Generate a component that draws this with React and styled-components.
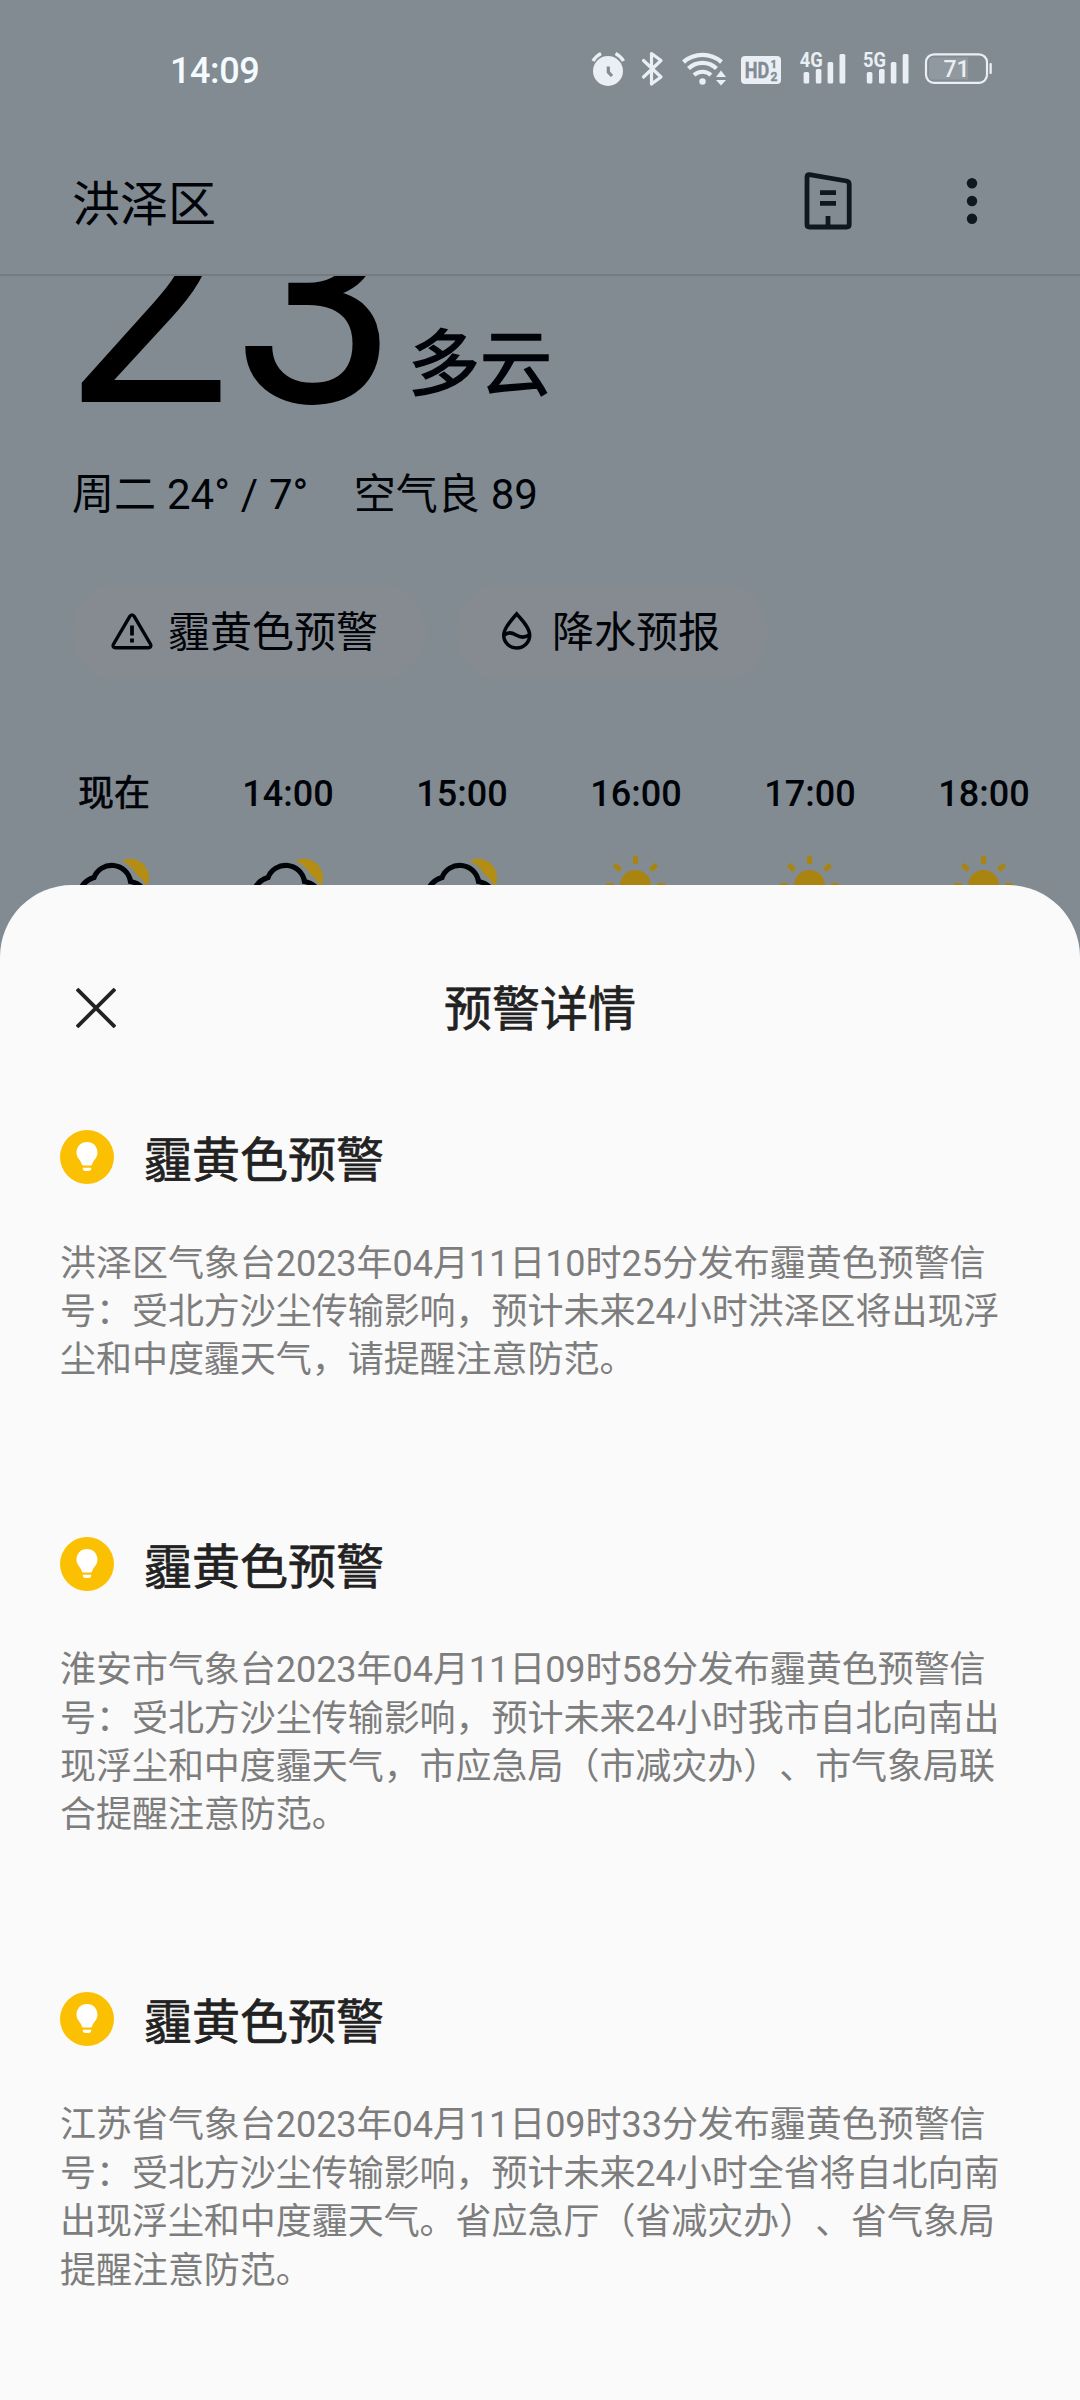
import React from "react";
import styled, { createGlobalStyle, css } from "styled-components";

const Global = createGlobalStyle`
  * { box-sizing: border-box; }
  html, body { margin: 0; padding: 0; background: #838b92; }
  body {
    font-family: Roboto, "Noto Sans CJK SC", sans-serif;
    text-spacing-trim: space-all;
    overflow: hidden;
  }
  svg { display: block; flex: none; }
`;

const medium = css`
  -webkit-text-stroke: ${(p) => p.$bold || 0.7}px currentColor;
`;

const Screen = styled.div`
  width: 1080px;
  height: 2400px;
  display: flex;
  flex-direction: column;
  background: #838b92;
  color: #000408;
  overflow: hidden;
`;

const StatusBar = styled.header`
  height: 128px;
  flex: none;
  display: flex;
  align-items: flex-start;
  justify-content: space-between;
  padding: 48px 86px 0 170px;
`;

const Clock = styled.time`
  padding-top: 1px;
  font-size: 36px;
  line-height: 44px;
  font-weight: 500;
  letter-spacing: -0.4px;
  color: #f4fbff;
`;

const TopBar = styled.nav`
  height: 148px;
  flex: none;
  display: flex;
  align-items: center;
  padding: 0 100px 0 72px;
  border-bottom: 2px solid #747b83;
`;

const City = styled.h1`
  margin: 7px 0 0;
  flex: 1;
  font-size: 48px;
  font-weight: 400;
  line-height: 60px;
`;

const Actions = styled.div`
  display: flex;
  align-items: center;
  gap: 112px;
`;

const Weather = styled.main`
  height: 609px;
  flex: none;
  overflow: hidden;
`;

const Current = styled.section`
  height: 160px;
  display: flex;
  align-items: flex-end;
  padding-left: 64px;
`;

const Temperature = styled.div`
  font-size: 298px;
  line-height: 200px;
  height: 130px;
  margin-bottom: 35px;
  display: flex;
  align-items: flex-end;
  color: #000;
`;

const Condition = styled.div`
  font-size: 72px;
  line-height: 100px;
  margin: 0 0 21px 9px;
  ${medium}
`;

const Summary = styled.p`
  margin: 29px 0 0;
  padding-left: 72px;
  display: flex;
  gap: 45.5px;
  font-size: 42px;
  line-height: 60px;
  word-spacing: 0.5px;
`;

const Chips = styled.div`
  display: flex;
  gap: 30px;
  padding-left: 72px;
  margin-top: 59px;
`;

const Chip = styled.div`
  height: 96px;
  border-radius: 48px;
  background: #868b92;
  display: flex;
  align-items: center;
  gap: 12px;
  padding: 0 48px 0 36px;
  font-size: 42px;
`;

const ChipLabel = styled.span`
  line-height: 60px;
  padding-top: 2px;
`;

const Hours = styled.div`
  display: flex;
  margin-top: 90px;
  padding-left: 27px;
`;

const Hour = styled.div`
  width: 174px;
  flex: none;
  display: flex;
  flex-direction: column;
  align-items: center;
  gap: 35px;
`;

const HourLabel = styled.span`
  font-size: 36px;
  line-height: 48px;
  font-weight: 500;
  ${(p) => p.$han && css`font-weight: 400; -webkit-text-stroke: 0.7px currentColor;`}
`;

const Sheet = styled.section`
  height: 1515px;
  flex: none;
  background: #fafafa;
  color: #222;
  border-radius: 72px 72px 0 0;
`;

const SheetHeader = styled.div`
  display: grid;
  grid-template-columns: 40px 1fr 40px;
  align-items: start;
  height: 159px;
  padding: 87px 76px 0;

  svg { margin-top: 16px; }
`;

const SheetTitle = styled.h2`
  margin: 2px 0 0;
  text-align: center;
  font-size: 48px;
  line-height: 72px;
  font-weight: 400;
  ${medium}
`;

const Alerts = styled.div`
  display: flex;
  flex-direction: column;
  gap: 143px;
  padding: 77px 60px 0;
`;

const Alert = styled.article`
  display: flex;
  flex-direction: column;
  gap: 46.5px;
`;

const AlertHead = styled.div`
  display: flex;
  align-items: center;
  gap: 30px;
  height: 72px;
`;

const AlertTitle = styled.h3`
  margin: 8px 0 0;
  font-size: 48px;
  line-height: 72px;
  font-weight: 400;
  ${medium}
`;

const AlertText = styled.p`
  margin: 0;
  width: 960px;
  font-size: 36px;
  line-height: 48.4px;
  letter-spacing: -0.04px;
  color: #7d7d7d;
`;

const ink = "#e9eff4";
const bg = "#838b92";

function Signal({ x, label }) {
  return (
    <g transform={`translate(${x} 0)`} fill={ink}>
      <text x="-3.5" y="19" fontSize="21" fontWeight="700" textLength="23" lengthAdjust="spacingAndGlyphs">{label}</text>
      <rect x="0.3" y="24" width="5.6" height="11.500" rx="1.5" />
      <rect x="12.5" y="21" width="5.6" height="14.500" rx="1.5" />
      <rect x="24.3" y="14" width="5.6" height="21.500" rx="1.5" />
      <rect x="36.2" y="6" width="5.8" height="29.500" rx="1.5" />
    </g>
  );
}

function StatusIcons() {
  return (
    <svg width="404" height="40" viewBox="0 0 404 40" fontFamily="Roboto, sans-serif">
      <g fill="none" stroke={ink} strokeWidth="3.4">
        <path d="M3 13 Q6 8 11 5.5 M25.5 5.5 Q30.500 8 33.5 13" />
        <path d="M53.500 12.500 L71 29 L61.500 36 V5.500 L71 12.500 L53.500 29" strokeWidth="3.200" strokeLinejoin="round" strokeLinecap="round" />
        <path d="M93.500 14 A29 29 0 0 1 131.500 14" strokeWidth="4.400" />
        <path d="M98.500 20.500 A20 20 0 0 1 126.500 20.500" strokeWidth="4.200" />
        <path d="M104 27 A12.500 12.500 0 0 1 121 27" strokeWidth="4" />
      </g>
      <circle cx="18" cy="23" r="15" fill={ink} />
      <path d="M18.300 18.500 V24 L22 28" fill="none" stroke={bg} strokeWidth="3.200" />
      <circle cx="112.500" cy="33.500" r="3.200" fill={ink} />
      <path d="M126 29 L131 22.500 L136 29 Z M126 32 L131 37.500 L136 32 Z" fill={ink} />
      <rect x="151" y="8" width="40" height="28" rx="4" fill={ink} />
      <g fill={bg} stroke={bg} strokeWidth="0.4" fontWeight="700">
        <text x="154.800" y="30" fontSize="22" textLength="24.500" lengthAdjust="spacingAndGlyphs">HD</text>
        <text x="180.500" y="19.500" fontSize="11">1</text>
        <text x="180.500" y="32.500" fontSize="12">2</text>
      </g>
      <Signal x={213.300} label="4G" />
      <Signal x={276.500} label="5G" />
      <rect x="336" y="6.300" width="61" height="28.500" rx="8" fill="none" stroke={ink} strokeWidth="2.200" />
      <path d="M343 9.500 H378 V31.500 H343 Q339 31.500 339 27.500 V13.500 Q339 9.500 343 9.500 Z" fill="#9098a0" />
      <rect x="399.500" y="15" width="2.300" height="11" rx="1" fill={ink} />
      <text x="366.500" y="28.800" fontSize="23" fontWeight="500" fill={ink} textAnchor="middle">71</text>
    </svg>
  );
}

const CityIcon = () => (
  <svg width="48" height="60" viewBox="0 0 48 60" fill="none" stroke="#10181f" strokeWidth="4.800">
    <path d="M5.500 3.700 L42.500 10 Q45.200 10.600 45.200 13 V53.500 Q45.200 56 42.700 56 H5.500 Q3 56 3 53.500 V6 Q3 3.300 5.500 3.700 Z" />
    <path d="M16 21.700 H32 M16 32.300 H32 M24 45 V56" />
  </svg>
);

const MoreIcon = () => (
  <svg width="16" height="60" viewBox="0 0 16 60" fill="#10181f">
    <circle cx="8" cy="12.300" r="5.200" />
    <circle cx="8" cy="30" r="5.200" />
    <circle cx="8" cy="47.700" r="5.200" />
  </svg>
);

const WarningIcon = () => (
  <svg width="48" height="48" viewBox="0 0 48 48" fill="none" stroke="#000408" strokeWidth="3.400" strokeLinejoin="round">
    <path d="M21.500 8.800 Q24 5 26.500 8.800 L42.700 36.500 Q43.500 39.700 40.500 39.700 H7.500 Q4.200 39.700 5.300 36.500 Z" />
    <path d="M24 17.500 V27.500 M24 30.500 V34.500" strokeWidth="3.800" />
  </svg>
);

const DropIcon = () => (
  <svg width="48" height="48" viewBox="0 0 48 48" fill="none" stroke="#000408" strokeWidth="3.500">
    <path d="M24.700 6 C20 11.500 11.700 19.500 11.700 27.300 A13 12.700 0 0 0 37.700 27.300 C37.700 19.500 29.500 11.500 24.700 6 Z" />
    <path d="M12.500 27 Q17 22.800 24 27 T37 27" />
  </svg>
);

const CloudSun = () => (
  <svg width="72" height="60" viewBox="0 0 72 60">
    <circle cx="52" cy="24.700" r="19" fill="#b38d14" />
    <path d="M33 5 Q39 5 44.500 8 Q55 14 58.500 22 Q64 25 67.500 32 V60 H4 V30 L12 22 Z" fill={bg} />
    <path d="M0 46 Q2 28.500 16 24.500 A19 19 0 0 1 52.500 28.500 Q67 31 67 46" fill="none" stroke="#000408" strokeWidth="5.200" />
  </svg>
);

const Sun = () => (
  <svg width="72" height="60" viewBox="0 0 72 60" fill="#a98410" stroke="#a98410">
    <circle cx="35.500" cy="32.500" r="15.500" stroke="none" />
    {[-90, -45, 0, 45, 90].map((a) => (
      <path key={a} d="M35.500 3 V11" strokeWidth="5" transform={`rotate(${a} 35.500 32.500)`} />
    ))}
  </svg>
);

const CloseIcon = () => (
  <svg width="40" height="40" viewBox="0 0 40 40" stroke="#222" strokeWidth="3.800">
    <path d="M1 1 L39 39 M39 1 L1 39" />
  </svg>
);

const BulbIcon = () => (
  <svg width="54" height="54" viewBox="0 0 54 54">
    <circle cx="27" cy="27" r="27" fill="#fcc002" />
    <path d="M27 12 C20.700 12 16.500 16.700 16.500 22.500 C16.500 28 21 30.500 21.700 34 Q22 35.500 23.500 35.500 H30.500 Q32 35.500 32.300 34 C33 30.500 37.500 28 37.500 22.500 C37.500 16.700 33.300 12 27 12 Z M22.700 37.700 H31.300 Q31.300 41 28.500 41 H25.500 Q22.700 41 22.700 37.700 Z" fill="#fff" />
  </svg>
);

const hours = [
  { label: "现在", icon: CloudSun, han: true },
  { label: "14:00", icon: CloudSun },
  { label: "15:00", icon: CloudSun },
  { label: "16:00", icon: Sun },
  { label: "17:00", icon: Sun },
  { label: "18:00", icon: Sun },
];

const alerts = [
  "洪泽区气象台2023年04月11日10时25分发布霾黄色预警信号：受北方沙尘传输影响，预计未来24小时洪泽区将出现浮尘和中度霾天气，请提醒注意防范。",
  "淮安市气象台2023年04月11日09时58分发布霾黄色预警信号：受北方沙尘传输影响，预计未来24小时我市自北向南出现浮尘和中度霾天气，市应急局（市减灾办）、市气象局联合提醒注意防范。",
  "江苏省气象台2023年04月11日09时33分发布霾黄色预警信号：受北方沙尘传输影响，预计未来24小时全省将自北向南出现浮尘和中度霾天气。省应急厅（省减灾办）、省气象局提醒注意防范。",
];

export default function App() {
  return (
    <Screen>
      <Global />
      <StatusBar>
        <Clock>14:09</Clock>
        <StatusIcons />
      </StatusBar>
      <TopBar>
        <City>洪泽区</City>
        <Actions>
          <CityIcon />
          <MoreIcon />
        </Actions>
      </TopBar>
      <Weather>
        <Current>
          <Temperature>23</Temperature>
          <Condition $bold={1.4}>多云</Condition>
        </Current>
        <Summary>
          <span>周二 24° / 7°</span>
          <span>空气良 89</span>
        </Summary>
        <Chips>
          <Chip><WarningIcon /><ChipLabel>霾黄色预警</ChipLabel></Chip>
          <Chip><DropIcon /><ChipLabel>降水预报</ChipLabel></Chip>
        </Chips>
        <Hours>
          {hours.map(({ label, icon: Icon, han }) => (
            <Hour key={label}>
              <HourLabel $han={han}>{label}</HourLabel>
              <Icon />
            </Hour>
          ))}
        </Hours>
      </Weather>
      <Sheet>
        <SheetHeader>
          <CloseIcon />
          <SheetTitle>预警详情</SheetTitle>
        </SheetHeader>
        <Alerts>
          {alerts.map((text) => (
            <Alert key={text}>
              <AlertHead>
                <BulbIcon />
                <AlertTitle>霾黄色预警</AlertTitle>
              </AlertHead>
              <AlertText>{text}</AlertText>
            </Alert>
          ))}
        </Alerts>
      </Sheet>
    </Screen>
  );
}
